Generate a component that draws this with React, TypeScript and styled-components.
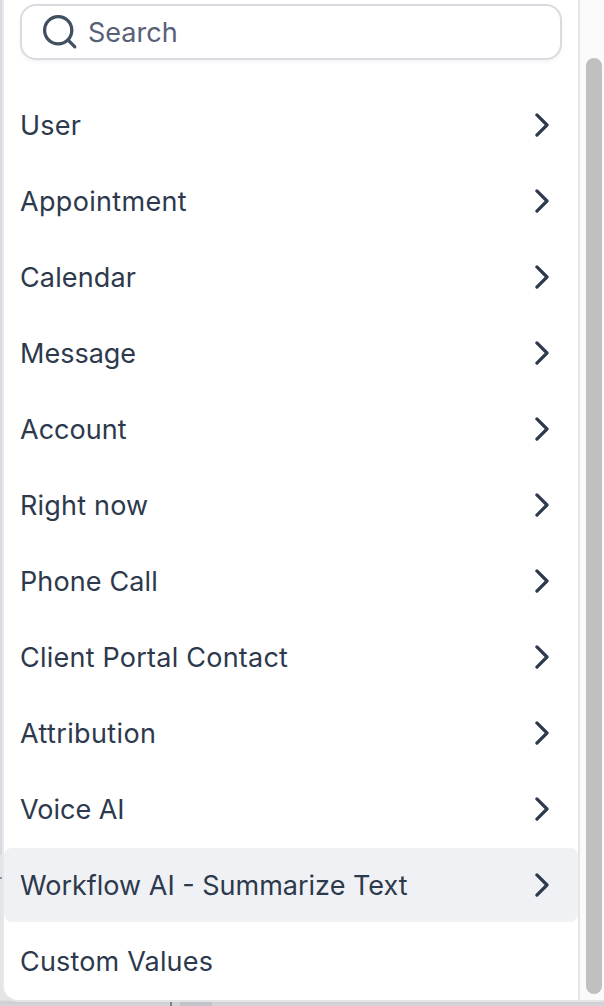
import React from "react";
import styled, { createGlobalStyle } from "styled-components";

const GlobalStyle = createGlobalStyle`
  * { box-sizing: border-box; }
  body { margin: 0; overflow: hidden; background: #e4e4e6; }
`;

const Page = styled.div`
  position: relative;
  width: 604px;
  height: 1006px;
  padding-left: 2px;
  overflow: hidden;
  background: linear-gradient(#e4e4e6 0 1000px, #cfcfd1 1002px, #d6d6d8 1006px);
  font-family: Inter, "Liberation Sans", sans-serif;
`;

const Backdrop = styled.div<{ $x: number; $y: number; $w: number; $h: number; $color: string }>`
  position: absolute;
  left: ${(p) => p.$x}px;
  top: ${(p) => p.$y}px;
  width: ${(p) => p.$w}px;
  height: ${(p) => p.$h}px;
  background: ${(p) => p.$color};
`;

const Popover = styled.div`
  position: relative;
  display: flex;
  width: 602px;
  height: 1002px;
  border-left: 2px solid #e8e8ec;
  border-bottom: 2px solid #e5e5e8;
  border-bottom-left-radius: 16px;
  background: #fff;
  overflow: hidden;
`;

const Menu = styled.div`
  width: 574px;
  padding-top: 4px;
`;

const SearchBox = styled.label`
  display: flex;
  align-items: center;
  width: 542px;
  height: 56px;
  margin: 0 0 28px 16px;
  padding-left: 20px;
  border: 2px solid #dadae0;
  border-radius: 16px;
  background: #fff;
  box-shadow: 0 2px 4px rgba(16, 24, 40, 0.05);
`;

const SearchInput = styled.input`
  width: 440px;
  height: 36px;
  margin-left: 10px;
  padding: 1px 0 0;
  border: 0;
  outline: 0;
  background: transparent;
  color: #344054;
  font: 400 27px/36px Inter, "Liberation Sans", sans-serif;
  &::placeholder { color: #586078; opacity: 1; }
`;

const List = styled.ul`
  display: flex;
  flex-direction: column;
  gap: 2px;
  margin: 0;
  padding: 0;
  list-style: none;
`;

const Item = styled.li<{ $active: boolean }>`
  display: flex;
  align-items: center;
  justify-content: space-between;
  height: 74px;
  padding: 0 28px 0 16px;
  border-radius: 8px;
  background: ${(p) => (p.$active ? "#f0f1f5" : "transparent")};
`;

const Label = styled.span<{ $tracking: number }>`
  padding-top: 2px;
  color: #2d394c;
  font-size: 27px;
  font-weight: 400;
  line-height: 36px;
  letter-spacing: ${(p) => p.$tracking}px;
  white-space: nowrap;
`;

const ScrollTrack = styled.div`
  display: flex;
  width: 26px;
  padding: 58px 0 6px 6px;
  border-left: 2px solid #e6e6e6;
  background: #fafafa;
`;

const ScrollThumb = styled.div`
  width: 16px;
  border-radius: 8px;
  background: #c0c0c0;
`;

const SearchIcon = () => (
  <svg width="36" height="36" viewBox="0 0 36 36" fill="none" stroke="#405060" strokeWidth="3.3" strokeLinecap="round">
    <circle cx="16.2" cy="16.2" r="13.6" />
    <path d="M26.2 26.2 32.8 32.8" />
  </svg>
);

const Chevron = () => (
  <svg width="16" height="24" viewBox="0 0 16 24" fill="none" stroke="#2d394c" strokeWidth="3.2" strokeLinecap="round" strokeLinejoin="round">
    <path d="M2.9 1.9 13 12 2.9 22.1" />
  </svg>
);

const items = [
  { label: "User", tracking: 0.2 },
  { label: "Appointment", tracking: 0.32 },
  { label: "Calendar", tracking: 0.15 },
  { label: "Message", tracking: 0 },
  { label: "Account", tracking: 0.03 },
  { label: "Right now", tracking: 0.2 },
  { label: "Phone Call", tracking: 0.13 },
  { label: "Client Portal Contact", tracking: 0.23 },
  { label: "Attribution", tracking: 0.37 },
  { label: "Voice AI", tracking: 0 },
  { label: "Workflow AI - Summarize Text", tracking: 0, active: true },
  { label: "Custom Values", tracking: 0.17, leaf: true },
];

export default function App() {
  return (
    <>
      <GlobalStyle />
      <Page>
        <Backdrop $x={0} $y={0} $w={2} $h={855} $color="#d9d9e0" />
        <Backdrop $x={0} $y={877} $w={2} $h={2} $color="#8c92a3" />
        <Backdrop $x={170} $y={1002} $w={2} $h={4} $color="#7b8094" />
        <Backdrop $x={180} $y={1002} $w={32} $h={4} $color="#c3c3cb" />
        <Popover>
          <Menu>
            <SearchBox>
              <SearchIcon />
              <SearchInput placeholder="Search" aria-label="Search" />
            </SearchBox>
            <List>
              {items.map((item) => (
                <Item key={item.label} $active={Boolean(item.active)}>
                  <Label $tracking={item.tracking}>{item.label}</Label>
                  {!item.leaf && <Chevron />}
                </Item>
              ))}
            </List>
          </Menu>
          <ScrollTrack>
            <ScrollThumb />
          </ScrollTrack>
        </Popover>
      </Page>
    </>
  );
}
